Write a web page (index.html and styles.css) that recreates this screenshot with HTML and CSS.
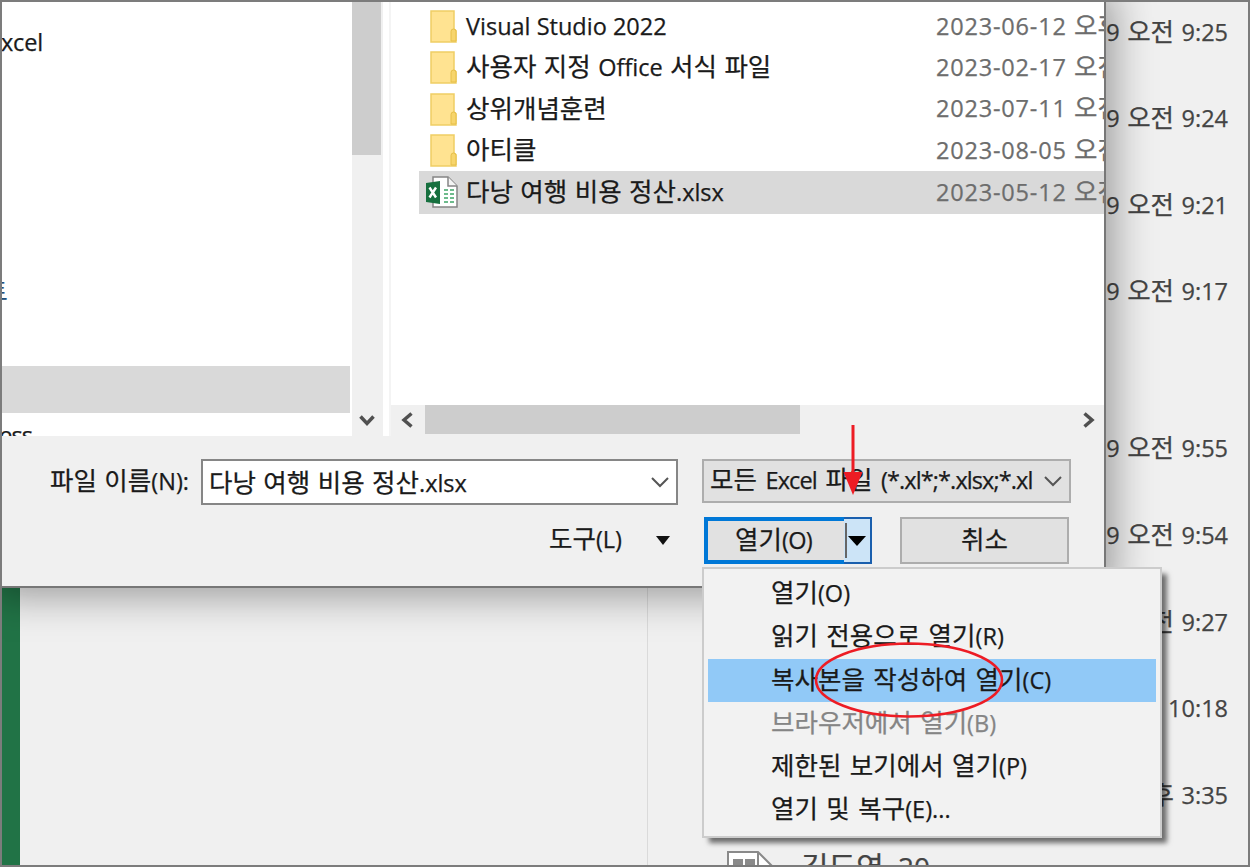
FILE: index.html
```html
<!DOCTYPE html>
<html lang="ko">
<head>
    <meta charset="UTF-8">
    <meta name="viewport" content="width=device-width, initial-scale=1.0">
    <title>열기</title>
    <link rel="stylesheet" href="styles.css">
</head>
<body>
    <div class="screen">
        <!-- Excel start screen -->
        <div class="backstage">
            <div class="rail"></div>
            <div class="pane"></div>
            <div class="recent">
                <div class="recent-row"><span class="time"><span class="en">9</span> 오전 <span class="en">9:25</span></span></div>
                <div class="recent-row"><span class="time"><span class="en">9</span> 오전 <span class="en">9:24</span></span></div>
                <div class="recent-row"><span class="time"><span class="en">9</span> 오전 <span class="en">9:21</span></span></div>
                <div class="recent-row"><span class="time"><span class="en">9</span> 오전 <span class="en">9:17</span></span></div>
                <div class="recent-row group"><span class="time"><span class="en">9</span> 오전 <span class="en">9:55</span></span></div>
                <div class="recent-row"><span class="time"><span class="en">9</span> 오전 <span class="en">9:54</span></span></div>
                <div class="recent-row"><span class="time"><span class="en">9</span> 오전 <span class="en">9:27</span></span></div>
                <div class="recent-row"><span class="time"><span class="en">10:18</span></span></div>
                <div class="recent-row"><span class="time">오후 <span class="en">3:35</span></span></div>
                <div class="recent-row last">
                    <svg class="doc-icon" width="46" height="50" viewBox="0 0 46 50">
                        <path d="M1 49V1h30l14 14v34z" fill="#fff" stroke="#8a8a8a" stroke-width="2"/>
                        <path d="M31 1v14h14" fill="none" stroke="#8a8a8a" stroke-width="2"/>
                        <path d="M6 8h10v8H6zM18 8h10v8H18z" fill="#8a8a8a"/>
                    </svg>
                    <span class="doc-name">김도연<span class="doc-num">_20</span></span>
                </div>
            </div>
        </div>

        <div class="dialog">
            <div class="browser">
                <div class="tree">
                    <div class="tree-item excel">xcel</div>
                    <div class="tree-item cut"><span>트</span></div>
                    <div class="tree-item selected"></div>
                    <div class="tree-item access">cess</div>
                </div>
                <div class="vscroll">
                    <div class="vthumb"></div>
                    <svg width="16" height="14" viewBox="0 0 16 14"><path d="M1.500 2.500L8 9.500l6.500-7" fill="none" stroke="#505050" stroke-width="3.500"/></svg>
                </div>
                <div class="splitter"></div>
                <div class="files">
                    <div class="rows">
                        <div class="row">
                            <svg class="folder" viewBox="0 0 27 33"><path d="M1 1h23v18l2 1.500V32H1z" fill="#ffe391" stroke="#efce64" stroke-width="1.500"/><path d="M21 31V21.500q0-2.500 2.500-2.500T26 21.500V31z" fill="#f7d56c" stroke="#e6bf48"/></svg>
                            <span class="name"><span class="en">Visual Studio 2022</span></span><span class="date"><span class="en">2023-06-12</span> 오후</span>
                        </div>
                        <div class="row">
                            <svg class="folder" viewBox="0 0 27 33"><path d="M1 1h23v18l2 1.500V32H1z" fill="#ffe391" stroke="#efce64" stroke-width="1.500"/><path d="M21 31V21.500q0-2.500 2.500-2.500T26 21.500V31z" fill="#f7d56c" stroke="#e6bf48"/></svg>
                            <span class="name">사용자 지정 <span class="en">Office</span> 서식 파일</span><span class="date"><span class="en">2023-02-17</span> 오전</span>
                        </div>
                        <div class="row">
                            <svg class="folder" viewBox="0 0 27 33"><path d="M1 1h23v18l2 1.500V32H1z" fill="#ffe391" stroke="#efce64" stroke-width="1.500"/><path d="M21 31V21.500q0-2.500 2.500-2.500T26 21.500V31z" fill="#f7d56c" stroke="#e6bf48"/></svg>
                            <span class="name">상위개념훈련</span><span class="date"><span class="en">2023-07-11</span> 오전</span>
                        </div>
                        <div class="row">
                            <svg class="folder" viewBox="0 0 27 33"><path d="M1 1h23v18l2 1.500V32H1z" fill="#ffe391" stroke="#efce64" stroke-width="1.500"/><path d="M21 31V21.500q0-2.500 2.500-2.500T26 21.500V31z" fill="#f7d56c" stroke="#e6bf48"/></svg>
                            <span class="name">아티클</span><span class="date"><span class="en">2023-08-05</span> 오전</span>
                        </div>
                        <div class="row selected">
                            <svg class="xlsx" viewBox="0 0 32 33">
                                <path d="M7 1h15l9 9v21H7z" fill="#fff" stroke="#858585" stroke-width="1.500"/>
                                <path d="M22 1v9h9" fill="#f4f4f4" stroke="#858585" stroke-width="1.500"/>
                                <path d="M18 14h4M24 14h4M18 18h4M24 18h4M18 22h4M24 22h4M18 26h4M24 26h4" stroke="#6dbb8c" stroke-width="2"/>
                                <path d="M0 7l14-2v23L0 26z" fill="#17703f"/>
                                <path d="M3.500 11.500l6.500 10M10 11.500l-6.500 10" stroke="#fff" stroke-width="2.400"/>
                            </svg>
                            <span class="name">다낭 여행 비용 정산<span class="en">.xlsx</span></span><span class="date"><span class="en">2023-05-12</span> 오전</span>
                        </div>
                    </div>
                    <div class="hscroll">
                        <svg width="14" height="16" viewBox="0 0 14 16"><path d="M11.500 1.500L4 8l7.500 6.500" fill="none" stroke="#505050" stroke-width="3.500"/></svg>
                        <div class="hthumb"></div>
                        <svg class="right" width="14" height="16" viewBox="0 0 14 16"><path d="M2.500 1.500L10 8l-7.500 6.500" fill="none" stroke="#505050" stroke-width="3.500"/></svg>
                    </div>
                </div>
            </div>

            <div class="name-bar">
                <span class="label">파일 이름<span class="en">(N):</span></span>
                <div class="input">
                    <span class="input-text">다낭 여행 비용 정산<span class="en">.xlsx</span></span>
                    <svg width="18" height="12" viewBox="0 0 18 12"><path d="M1 2l8 8 8-8" fill="none" stroke="#555" stroke-width="2"/></svg>
                </div>
                <div class="type">
                    <span class="type-text">모든 <span class="en">Excel</span> 파일 <span class="en">(*.xl*;*.xlsx;*.xl</span></span>
                    <svg width="18" height="12" viewBox="0 0 18 12"><path d="M1 2l8 8 8-8" fill="none" stroke="#555" stroke-width="2"/></svg>
                </div>
            </div>
            <div class="buttons">
                <span class="tools">도구<span class="en">(L)</span></span>
                <svg class="caret" width="14" height="9" viewBox="0 0 14 9"><path d="M0 0h14L7 9z" fill="#111"/></svg>
                <div class="open">
                    <span class="open-text">열기<span class="en tight">(O)</span></span>
                    <div class="split">
                        <svg width="18" height="10" viewBox="0 0 18 10"><path d="M0 0h18L9 10z" fill="#000"/></svg>
                    </div>
                </div>
                <div class="cancel">취소</div>
            </div>
        </div>

        <div class="menu">
            <div class="item">열기<span class="en">(O)</span></div>
            <div class="item">읽기 전용으로 열기<span class="en">(R)</span></div>
            <div class="item active">복사본을 작성하여 열기<span class="en">(C)</span></div>
            <div class="item disabled">브라우저에서 열기<span class="en">(B)</span></div>
            <div class="item">제한된 보기에서 열기<span class="en">(P)</span></div>
            <div class="item">열기 및 복구<span class="en">(E)...</span></div>
        </div>

        <!-- red marks -->
        <svg class="marks" width="1250" height="867" viewBox="0 0 1250 867">
            <path d="M853 425v50" stroke="#ed1c24" stroke-width="3"/>
            <path d="M843.500 472h19L853 495z" fill="#ed1c24"/>
            <ellipse cx="909" cy="680" rx="93" ry="36.500" fill="none" stroke="#ed1c24" stroke-width="2.600"/>
        </svg>
    </div>
</body>
</html>
```

FILE: styles.css
```css
:root {
    --gray: #f0f0f0;
    --thumb: #cdcdcd;
    --line: #7c7c7c;
}

* {
    box-sizing: border-box;
}

body {
    margin: 0;
    font-family: "Open Sans", "Noto Sans CJK KR", sans-serif;
    font-size: 25.5px;
    line-height: 32px;
    color: #1a1a1a;
    white-space: nowrap;
    word-spacing: 0.8px;
    -webkit-text-stroke: 0.25px;
}
svg {
    display: block;
    flex: none;
}
/* latin letters and digits are a bit smaller than hangul */
.en {
    font-size: 23.5px;
    word-spacing: 0;
}
.en.tight {
    letter-spacing: -0.7px;
}
.screen {
    position: relative;
    width: 1250px;
    height: 867px;
    overflow: hidden;
    background: var(--gray);
}
.screen::after {
    content: "";
    position: absolute;
    inset: 0;
    border: 2px solid var(--line);
}

/* background window */
.backstage {
    display: flex;
    height: 867px;
}
.rail {
    width: 20px;
    background: #217346;
}
.pane {
    width: 627px;
}
.recent {
    flex: 1;
    border-left: 1px solid #dadada;
    overflow: hidden;
}
.recent-row {
    display: flex;
    align-items: center;
    justify-content: flex-end;
    height: 86.6px;
    padding-right: 22px;
    color: #444;
}
.recent-row:first-child {
    margin-top: -12.300px;
}
.recent-row.group {
    margin-top: 70.500px;
}
.recent-row.last {
    align-items: flex-start;
    justify-content: flex-start;
    padding: 13px 0 0 79px;
}
.doc-name {
    margin: 0 0 0 28px;
    font-size: 30px;
}
.doc-num {
    margin-left: 2px;
    font-size: 28px;
}

/* dialog window */
.dialog {
    position: absolute;
    top: 0;
    left: 0;
    width: 1106px;
    height: 588px;
    background: var(--gray);
    border-right: 2px solid #777;
    border-bottom: 2px solid #777;
    box-shadow: 0 0 38px 8px rgba(0, 0, 0, 0.36);
}
.browser {
    display: flex;
    height: 436px;
    background: #fff;
}
.tree {
    width: 350px;
    height: 436px;
    overflow: hidden;
    font-size: 23.5px;
}
.tree-item {
    height: 47px;
    padding-left: 1px;
    line-height: 47px;
}
.tree-item.excel {
    margin-top: 19px;
    letter-spacing: -0.2px;
}
.tree-item.cut {
    margin-top: 202px;
    overflow: hidden;
}
.cut span {
    margin-left: -15px;
    color: #1f4e79;
}
.tree-item.selected {
    height: 47px;
    margin-top: 51px;
    background: #d9d9d9;
}
.tree-item.access {
    margin-left: -12px;
    line-height: 44px;
    letter-spacing: -1px;
}
.vscroll {
    display: flex;
    flex-direction: column;
    justify-content: space-between;
    align-items: flex-start;
    width: 31px;
    margin-left: 2px;
    padding-bottom: 8px;
    background: var(--gray);
}
.vscroll svg {
    margin-left: 7px;
}
.vthumb {
    width: 29px;
    height: 155px;
    background: var(--thumb);
}
.splitter {
    width: 8px;
    border-right: 2px solid #f4f4f4;
}
.files {
    display: flex;
    flex-direction: column;
    justify-content: space-between;
    flex: 1;
    overflow: hidden;
}
.rows {
    padding: 6px 0 0 28px;
}
.row {
    display: flex;
    align-items: center;
    height: 41.3px;
    padding-left: 11px;
}
.row.selected {
    height: 43px;
    padding-left: 7px;
    background: #d9d9d9;
}
.folder {
    width: 27px;
    height: 33px;
}
.xlsx {
    width: 32px;
    height: 33px;
    margin-right: -1px;
}
.name {
    flex: none;
    width: 470px;
    margin-left: 9px;
}
.name, .date {
    margin-top: -3px;
}
.date {
    color: #6d6d6d;
}
.date .en {
    letter-spacing: 0.8px;
}
.hscroll {
    display: flex;
    align-items: center;
    height: 31px;
    padding: 0 8px 2px 9px;
    background: var(--gray);
}
.hthumb {
    width: 375px;
    height: 29px;
    margin-left: 11px;
    background: var(--thumb);
}
.hscroll .right {
    margin-left: auto;
}

/* file name and type */
.name-bar {
    display: flex;
    align-items: flex-start;
    padding: 23px 0 0 50px;
}
.label {
    width: 151px;
    padding-top: 5px;
}
.input, .type {
    display: flex;
    align-items: center;
    justify-content: space-between;
}
.input {
    width: 477px;
    height: 46px;
    padding: 0 7px 0 6px;
    border: 2px solid #868686;
    background: #fff;
}
.type {
    width: 369px;
    height: 44px;
    margin-left: 24px;
    padding: 0 7px 0 6px;
    border: 2px solid #adadad;
    background: #e1e1e1;
}
.type-text {
    margin-top: -3px;
    word-spacing: 2px;
}
.type .en {
    letter-spacing: -0.9px;
}
.buttons {
    display: flex;
    align-items: center;
    height: 47px;
    margin-top: 12px;
    padding-left: 549px;
}
.tools {
    width: 107px;
    margin-top: -4px;
}
.open {
    display: flex;
    width: 168px;
    height: 47px;
    margin-left: 34px;
    background: #e1e1e1;
}
.open-text {
    width: 140px;
    padding-right: 5px;
    border: 4px solid #0078d7;
    border-right: 0;
    line-height: 36px;
    text-align: center;
}
.split {
    display: flex;
    align-items: center;
    justify-content: center;
    position: relative;
    width: 28px;
    border: 2px solid #1a5fae;
    border-left: 0;
    background: #cce4f7;
}
.split::before {
    content: "";
    position: absolute;
    left: 1px;
    top: 4px;
    width: 2px;
    height: 35px;
    background: #666;
}
.cancel {
    width: 169px;
    height: 47px;
    margin-left: 28px;
    border: 2px solid #adadad;
    background: #e1e1e1;
    line-height: 40px;
    text-align: center;
}

/* dropdown menu */
.menu {
    position: absolute;
    top: 567px;
    left: 702px;
    width: 460px;
    height: 271px;
    padding: 3px 4px;
    border: 2px solid #ccc;
    background: #f2f2f2;
    box-shadow: 6px 6px 5px -1px rgba(0, 0, 0, 0.55);
}
.item {
    height: 43.3px;
    padding-left: 63px;
    line-height: 40px;
    word-spacing: 1.8px;
}
.item.active {
    background: #91c9f7;
}
.item.disabled {
    color: #858585;
}

.marks {
    position: absolute;
    top: 0;
    left: 0;
}
```
